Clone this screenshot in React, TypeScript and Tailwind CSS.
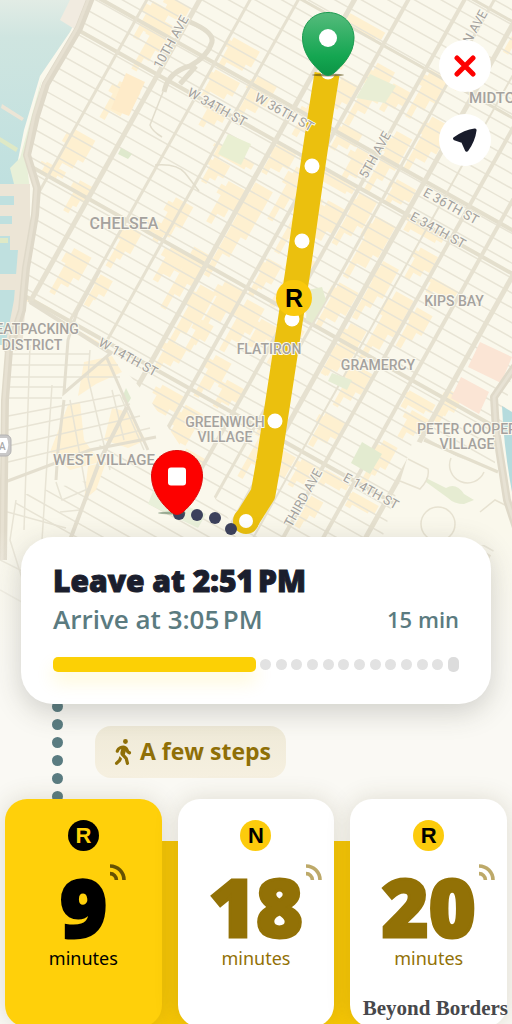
import { FaPersonWalking } from "react-icons/fa6";

/* ───────────────── Data ───────────────── */

type Departure = {
  line: string;
  minutes: number;
  active?: boolean;
};

const departures: Departure[] = [
  { line: "R", minutes: 9, active: true },
  { line: "N", minutes: 18 },
  { line: "R", minutes: 20 },
];

type Label = {
  text: string;
  x: number;
  y: number;
  size?: number;
  angle?: number;
};

const districts: Label[] = [
  { text: "CHELSEA", x: 124, y: 229, size: 16 },
  { text: "EATPACKING", x: 37, y: 334, size: 14 },
  { text: "DISTRICT", x: 32, y: 350, size: 14 },
  { text: "FLATIRON", x: 269, y: 354, size: 14 },
  { text: "KIPS BAY", x: 454, y: 306, size: 14 },
  { text: "GRAMERCY", x: 378, y: 370, size: 14 },
  { text: "GREENWICH", x: 225, y: 427, size: 14 },
  { text: "VILLAGE", x: 225, y: 442, size: 14 },
  { text: "PETER COOPER", x: 467, y: 434, size: 14 },
  { text: "VILLAGE", x: 467, y: 449, size: 14 },
  { text: "WEST VILLAGE", x: 104, y: 465, size: 15 },
  { text: "MIDTOWN", x: 504, y: 103, size: 15 },
];

const streetNames: Label[] = [
  { text: "10TH AVE", x: 175, y: 44, angle: -61 },
  { text: "W 34TH ST", x: 215, y: 111, angle: 29 },
  { text: "W 36TH ST", x: 282, y: 116, angle: 29 },
  { text: "N AVE", x: 479, y: 29, angle: -61 },
  { text: "5TH AVE", x: 379, y: 157, angle: -61 },
  { text: "E 36TH ST", x: 449, y: 210, angle: 29 },
  { text: "E 34TH ST", x: 436, y: 234, angle: 29 },
  { text: "W 14TH ST", x: 126, y: 361, angle: 29 },
  { text: "THIRD AVE", x: 307, y: 500, angle: -61 },
  { text: "E 14TH ST", x: 369, y: 495, angle: 29 },
];

// the street grid is turned 29.3°, these are positions across it
const avenues: [number, number][] = [
  [128, 3], [174, 5], [218, 3], [260, 3], [309, 5], [356, 4],
  [405, 4], [431, 3], [459, 5], [484, 2], [510, 4], [545, 4], [582, 5],
];

const crossStreets: [number, number][] = [
  [-232, 3], [-148, 3], [-50, 4], [-12, 4], [130, 4], [246, 4],
];

// x, y, width, height inside the turned grid
const blocks: [number, number, number, number][] = [
  [134, -74, 20, 36], [148, -86, 22, 20], [148, -62, 18, 50], [144, 12, 24, 36],
  [222, -82, 30, 30], [222, -45, 28, 26], [234, -16, 20, 24], [262, -60, 22, 40],
  [128, 76, 24, 42], [120, 118, 22, 12], [158, 118, 16, 30], [262, 18, 40, 12],
  [264, 32, 18, 24], [288, 46, 20, 40], [250, 86, 20, 42], [312, 34, 20, 92],
  [222, 134, 16, 40], [240, 116, 24, 14], [270, 130, 20, 34], [290, 120, 18, 60],
  [186, 180, 20, 44], [222, 190, 14, 30], [314, 150, 18, 60],
  [334, 134, 22, 46], [332, 180, 14, 30], [314, 214, 20, 26], [170, 244, 26, 18],
  [360, -130, 20, 60], [384, -120, 20, 26], [360, -60, 22, 24], [384, -46, 20, 32],
  [312, -160, 40, 14], [312, -130, 20, 40], [336, -100, 18, 36], [320, -60, 16, 30],
  [338, -40, 18, 28], [312, -10, 22, 28], [340, 0, 16, 52], [362, -10, 40, 12],
  [362, 16, 18, 60], [384, 14, 20, 46], [384, 74, 20, 52], [360, 94, 16, 36],
  [410, -150, 20, 46], [436, -190, 22, 40], [464, -240, 30, 34], [410, -80, 18, 60],
  [434, -110, 22, 52], [434, -38, 22, 24], [408, -8, 20, 50], [434, 4, 22, 60],
  [464, -12, 40, 13], [488, 10, 20, 30], [462, 40, 18, 56], [434, 80, 22, 44],
  [410, 100, 18, 28], [464, 110, 18, 50], [488, 60, 20, 70], [514, 30, 28, 14],
  [514, 64, 18, 38], [462, 134, 20, 30], [362, 140, 20, 50], [384, 150, 20, 26],
  [362, 204, 18, 40], [384, 220, 20, 26], [410, 140, 18, 40], [488, 144, 20, 40],
  [548, 140, 30, 16], [560, 156, 20, 26], [486, 200, 22, 32], [440, 230, 20, 60],
  [464, 254, 18, 40], [488, 252, 20, 26], [514, 250, 28, 14], [514, 280, 14, 30],
  [550, 196, 16, 42], [584, 120, 14, 30], [548, 256, 30, 14], [330, 256, 24, 30],
  [314, 280, 22, 50], [288, 290, 18, 50], [360, 262, 20, 60], [382, 300, 22, 40],
  [250, 278, 22, 40], [230, 250, 24, 30], [268, 330, 22, 46], [336, 320, 18, 50],
];

const stops: [number, number][] = [
  [328, 72], [312, 166], [302, 241], [292, 319], [275, 421],
];

const walkDots: [number, number][] = [
  [179, 514], [197, 515], [215, 518], [231, 529],
];

const minorStreets = Array.from({ length: 52 }, (_, i) => -320 + i * 13);

/* ───────────────── Map ───────────────── */

// a block with two stepped corners, so that rows do not look like tiles
function blockPath([x, y, w, h]: [number, number, number, number]) {
  return `M${x} ${y}h${w}v${h * 0.6}h-6v${h * 0.25}h-${w - 12}v${h * 0.3}h-6V${y + h * 0.4}h-5v-${h * 0.25}h5Z`;
}

function RouteMap() {
  return (
    <svg
      className="absolute inset-x-0 top-0 h-[700px] w-full"
      viewBox="0 0 512 700"
      preserveAspectRatio="xMidYMin slice"
      role="img"
      aria-label="Route map"
    >
      <defs>
        <linearGradient id="water" x1="0" y1="0" x2="0" y2="1">
          <stop offset="0" stopColor="#e2ece5" />
          <stop offset="0.2" stopColor="#cfe5e0" />
          <stop offset="1" stopColor="#bfe0df" />
        </linearGradient>
        <linearGradient id="start" x1="0" y1="0" x2="0" y2="1">
          <stop offset="0" stopColor="#55bb7c" />
          <stop offset="0.7" stopColor="#14a651" />
          <stop offset="1" stopColor="#0c9445" />
        </linearGradient>
        <linearGradient id="haze" x1="0" y1="0" x2="0" y2="1">
          <stop offset="0" stopColor="#faf9f4" stopOpacity="0" />
          <stop offset="0.8" stopColor="#faf9f4" stopOpacity="1" />
          <stop offset="1" stopColor="#faf9f4" stopOpacity="1" />
        </linearGradient>
        <clipPath id="uptown">
          <path d="M92 0 78 31 46 85 34 120 27 155 37 190 34 215 25 300 112 354 150 400 236 530 230 700H500V540L486 510 512 373V0Z" />
        </clipPath>
        <clipPath id="village">
          <path d="M112 400 150 400 236 530 230 700H0V500L90 480Z" />
        </clipPath>
      </defs>

      <rect width="512" height="700" fill="#faf8ec" />

      <g clipPath="url(#village)">
        <g transform="rotate(29.3)" stroke="#e8e4d5" strokeWidth="1.5">
          <path d="M260 340H700M260 353H700M260 366H700M260 379H700M260 392H700M260 405H700M260 418H700M260 431H700" />
        </g>
      </g>
      <path
        d="M84 362 112 356 122 372 96 384 78 396ZM68 405 80 402 84 440 100 462 70 470 50 452ZM112 408 128 412 146 440 128 448 104 440ZM88 466 106 462 96 490 84 500Z"
        fill="#fef1d3"
      />

      <g clipPath="url(#uptown)">
        <g transform="rotate(29.3)">
          {blocks.map((b) => (
            <path key={`${b[0]}-${b[1]}`} d={blockPath(b)} fill="#fef0d0" />
          ))}
          <path
            d={minorStreets.map((y) => `M-20 ${y}H700`).join("")}
            stroke="#e8e4d5"
            strokeWidth="1.500"
          />
          {crossStreets.map(([y, w]) => (
            <path key={y} d={`M0 ${y}H700`} stroke="#e4dfcd" strokeWidth={w} />
          ))}
          {avenues.map(([x, w]) => (
            <path key={x} d={`M${x} -400V500`} stroke="#e6e1d0" strokeWidth={w} />
          ))}
        </g>
      </g>

      {/* plain blocks and parks */}
      <path d="M126 73 145 82 129 116 111 109Z" fill="#feebc9" />
      <path d="M228 134 251 144 241 165 218 154Z" fill="#e9efd2" />
      <path d="M121 148 132 154 128 159 118 154Z" fill="#dfe9cd" />
      <path d="M370 74 396 86 385 103 356 98Z" fill="#e9eed5" />
      <path d="M308 290 322 287 326 300 312 323 306 320Z" fill="#e6ecd0" />
      <path d="M332 373 352 380 347 390 328 381Z" fill="#e6edd4" />
      <path d="M362 442 382 454 370 474 351 463Z" fill="#e3ebd0" />
      <path d="M480 342 512 357 501 383 468 367Z" fill="#fbe5d5" />
      <path d="M461 377 489 392 479 414 451 398Z" fill="#fbe5d5" />
      <path d="M159 476 172 500 206 514 198 528 148 504Z" fill="#e9f0da" />
      <path d="M126 388 131 398 127 405 122 398Z" fill="#e0ead0" />

      {/* West Village */}
      <g fill="none" stroke="#e8e4d5" strokeWidth="1.5">
        <path d="M8 365H118M8 377H120M8 387H66M8 398H62M8 354H90M30 345 24 530M52 385 42 540" />
        <path d="M90 350 88 378M8 416 120 395M8 430 130 404M8 446 140 416M8 462 150 428" />
        <path d="M70 400 88 500M88 378 110 470M112 390 124 440M120 395 144 450" />
        <path d="M56 482 62 500 90 488M60 512 80 510M0 510 66 528M16 500 10 540" />
        <path d="M0 560 120 620M0 590 90 640M10 540 60 700" />
      </g>
      <g fill="none" stroke="#e4dfcf" strokeWidth="3">
        <path d="M100 270 77 312 68 340 64 393 112 352M64 400 58 450 56 480M106 356 127 404 148 450M5 482 90 450 156 437" />
        <path d="M127 407 100 460 70 540 50 600M30 302 112 354" strokeWidth="4" />
      </g>

      {/* Peter Cooper Village */}
      <path d="M413 440 498 472 508 545H380Z" fill="#faf8ec" />
      <path
        d="M426 478 446 488Q456 482 464 494L474 500 464 504Q454 504 448 498L426 482Z"
        fill="#e6ecd2"
      />
      <g fill="none" stroke="#e7e2d1" strokeWidth="1.5">
        <circle cx="438" cy="524" r="17" />
        <path d="M451 458a17 17 0 0 0 33 14M408 459l20 10q2 10-8 20l-20-8M480 512l15-12 12 6" />
      </g>
      <path d="M424 440 498 472" stroke="#e4dfcd" strokeWidth="3" />

      {/* ramps round the rail yards */}
      <g fill="none" stroke="#e2ddcc">
        <path d="M190 22q24 10 22 20-4 14-22 24-22 6-26 26M196 66l-16 18" strokeWidth="5" />
        <path d="M163 92 150 125q2 6 12 12M155 165q22-2 30 8l14 18" strokeWidth="1.5" />
      </g>

      {/* rivers */}
      <path d="M0 0H86L70 32 40 76 24 130 18 160 16 184 0 186Z" fill="url(#water)" />
      <path d="M0 186H18V345H0Z" fill="#bfe0df" />
      <path d="M70 0H90L76 30 60 20Z" fill="#f1ebe0" />
      <path d="M42 78 20 158 10 168 14 184 30 190 26 158Z" fill="#e8f0d8" />
      <g fill="#ece5d6">
        <path d="M0 184H30V250H10V236H0V224H12V216H0V205H14V196H0Z" />
        <path d="M0 274H22V290H0ZM2 104 24 118 22 121 1 108Z" />
        <path d="M18 250H30L22 350 4 352 14 300Z" />
      </g>
      <path d="M0 137 18 148 16 152 0 142ZM0 238H8V243H0Z" fill="#dfe9c6" />
      <path d="M502 406 512 412V492Q504 450 502 406Z" fill="#b5dbdd" />

      {/* highways */}
      <g fill="none" strokeLinejoin="round">
        <path d="M92-5 79 28 46 84 36 116 27 155 37 188 35 215 26 268 22 310 9 350 5 400 3 560" stroke="#dfd9c9" strokeWidth="8" />
        <path d="M90-5 77 28 44 84 34 116 26 155 36 188 34 215 25 268 21 310 8 350 4 400 2 560" stroke="#e7e1d2" strokeWidth="3" />
        <path d="M518 362 494 397 496 430 507 500 520 540" stroke="#dfd9c9" strokeWidth="8" />
        <path d="M518 362 494 397 496 430 507 500 520 540" stroke="#e7e2d4" strokeWidth="3" />
      </g>

      <g>
        <rect x="-12" y="435" width="23" height="21" rx="5" fill="#c9c8c8" stroke="#b4b3b3" />
        <path d="M-10 438H7q3 8-1 15H-10Z" fill="#fff" />
        <text x="-1" y="450" fontSize="10" className="font-['Roboto',sans-serif] font-medium" fill="#aaa">
          A
        </text>
      </g>

      <rect y="530" width="512" height="170" fill="url(#haze)" />

      {/* route */}
      <path
        d="M327 74C312 166 306 215 298 270L269 460 263 494 246 521"
        fill="none"
        stroke="#ebc00e"
        strokeWidth="25"
        strokeLinejoin="round"
      />
      <circle cx="246" cy="521" r="13" fill="#ebc00e" />
      <circle cx="246" cy="521" r="7" fill="#fff" />
      {stops.map(([x, y]) => (
        <circle key={y} cx={x} cy={y} r="7.5" fill="#fff" />
      ))}
      <circle cx="294" cy="298" r="18" fill="#fac90c" />
      <text
        x="294"
        y="307"
        fontSize="25"
        textAnchor="middle"
        className="font-['Liberation_Sans',sans-serif] font-bold"
      >
        R
      </text>
      {walkDots.map(([x, y]) => (
        <circle key={x} cx={x} cy={y} r="6" fill="#3c415c" />
      ))}

      {/* names */}
      <g
        className="font-['Roboto',sans-serif] font-medium"
        fill="#a5a29e"
        stroke="#fbf9ee"
        strokeWidth="2"
        paintOrder="stroke"
        textAnchor="middle"
      >
        {districts.map((d) => (
          <text key={`${d.text}-${d.x}-${d.y}`} x={d.x} y={d.y} fontSize={d.size}>
            {d.text}
          </text>
        ))}
      </g>
      <g
        className="font-['Roboto',sans-serif]"
        fill="#a3a19d"
        stroke="#fbf9ee"
        strokeWidth="2"
        paintOrder="stroke"
        textAnchor="middle"
      >
        {streetNames.map((s) => (
          <text
            key={s.text}
            fontSize="13"
            transform={`translate(${s.x} ${s.y}) rotate(${s.angle})`}
          >
            {s.text}
          </text>
        ))}
      </g>

      {/* pins */}
      <ellipse cx="328" cy="75" rx="16" ry="1.5" fill="#5a4a10" opacity="0.6" />
      <path
        d="M328 12.500C313 12.500 302.500 24 302.500 38 302.500 54 314 66 322 73Q328 78 334 73C342 66 354 54 354 38 354 24 343 12.500 328 12.500Z"
        fill="url(#start)"
        stroke="#1c9a50"
        strokeWidth="1"
      />
      <circle cx="328" cy="38" r="9" fill="#fff" />
      <ellipse cx="172" cy="513" rx="14" ry="1.500" fill="#4a6a4a" opacity="0.5" />
      <path
        d="M177 450.500C162 450.500 151.500 462 151.500 476 151.500 492 163 505 171 512Q177 517 183 512C191 505 202.500 492 202.500 476 202.500 462 192 450.500 177 450.500Z"
        fill="#fd0100"
        stroke="#dd0a0a"
        strokeWidth="1"
      />
      <rect x="168" y="467.500" width="18" height="18" rx="3" fill="#fff" />
    </svg>
  );
}

/* ───────────────── Parts ───────────────── */

function SignalIcon() {
  return (
    <svg
      className="absolute top-0 left-full ml-[3px] size-4 opacity-60"
      viewBox="0 0 16 16"
      fill="none"
      stroke="currentColor"
      strokeWidth="3.6"
      aria-hidden="true"
    >
      <path d="M0 2A14 14 0 0 1 14 16" />
      <path d="M0 9.600A6.400 6.400 0 0 1 6.400 16" />
    </svg>
  );
}

function DepartureCard({ line, minutes, active }: Departure) {
  return (
    <button
      type="button"
      className={`flex h-[228px] flex-col items-center rounded-[22px] pt-[21px] shadow-[0_0_24px_rgba(80,70,30,0.16)] ${
        active ? "bg-[#ffd00a] text-black" : "bg-white text-[#927106]"
      }`}
    >
      <span
        className={`flex size-[31px] items-center justify-center rounded-full font-['Liberation_Sans',sans-serif] text-[22px] font-bold ${
          active ? "bg-black text-[#ffd00a]" : "bg-[#fccb0c] text-black"
        }`}
      >
        {line}
      </span>
      <span className="relative mt-[13px] font-['Noto_Sans',sans-serif] text-[80px] leading-[84px] font-black [-webkit-text-stroke:3px_currentColor] [stroke-linejoin:round]">
        {minutes}
        <SignalIcon />
      </span>
      <span className="font-['Noto_Sans',sans-serif] text-[18px] leading-5">
        minutes
      </span>
    </button>
  );
}

function TripCard() {
  return (
    <section className="relative z-10 mx-[21px] rounded-[32px] bg-white px-8 pt-6 pb-8 shadow-[0_8px_28px_rgba(60,60,50,0.22)]">
      <h1 className="font-['Open_Sans',sans-serif] text-[30px] leading-10 font-extrabold text-[#1b1e2d] [-webkit-text-stroke:1px_currentColor]">
        Leave at 2:51{"\u202f"}PM
      </h1>
      <div className="flex items-center justify-between text-[#5b7b80]">
        <p className="font-['Open_Sans',sans-serif] text-[26px] leading-9 font-semibold">
          Arrive at 3:05{"\u202f"}PM
        </p>
        <p className="font-['Open_Sans',sans-serif] text-[22px] leading-8 font-semibold">
          15 min
        </p>
      </div>
      <div className="mt-5 flex items-center gap-1">
        <div className="h-[15px] w-1/2 rounded-[5px] bg-[#fcd005] shadow-[0_10px_18px_rgba(255,215,0,0.16)]" />
        <div className="flex flex-1 items-center justify-between">
          {Array.from({ length: 12 }, (_, i) => (
            <span key={i} className="size-[11px] rounded-full bg-[#e2e2e2]" />
          ))}
          <span className="h-[15px] w-[11px] rounded-[5px] bg-[#dcdcdc]" />
        </div>
      </div>
    </section>
  );
}

/* ───────────────── Page ───────────────── */

export default function App() {
  return (
    <main className="relative flex h-screen flex-col overflow-hidden bg-[#faf9f4]">
      <RouteMap />

      <div className="relative flex flex-1 flex-col items-end gap-[22px] pt-10 pr-[21px]">
        <button
          type="button"
          aria-label="Close"
          className="flex size-[52px] items-center justify-center rounded-full bg-white"
        >
          <svg viewBox="0 0 22 22" className="size-[22px]" aria-hidden="true">
            <path d="M3 3 19 19M19 3 3 19" stroke="#fd0100" strokeWidth="5" strokeLinecap="round" />
          </svg>
        </button>
        <button
          type="button"
          aria-label="Center map"
          className="flex size-[52px] items-center justify-center rounded-full bg-white"
        >
          <svg viewBox="0 0 24 24" className="size-6" aria-hidden="true">
            <path
              d="M21.800 2.200Q12 3.500 1.800 10.600L9.800 13.400 13.700 22Q20.500 12.500 21.800 2.200Z"
              fill="#191c2b"
              stroke="#191c2b"
              strokeWidth="3.500"
              strokeLinejoin="round"
            />
          </svg>
        </button>
      </div>

      <TripCard />

      <section className="relative flex h-[95px] items-center px-[52px]">
        <div className="flex flex-col gap-[7px]">
          {Array.from({ length: 6 }, (_, i) => (
            <span key={i} className="size-[11px] rounded-full bg-[#5a7c81]" />
          ))}
        </div>
        <p className="ml-8 flex h-[52px] items-center gap-1 rounded-2xl bg-linear-to-b from-[#efead8] to-[#f6f0e0] px-[15px] font-['Open_Sans',sans-serif] text-[23px] font-bold text-[#8f6f07]">
          <FaPersonWalking className="size-[26px]" aria-hidden="true" />
          A few steps
        </p>
      </section>

      <section className="relative px-[5px]">
        <div className="absolute inset-x-1/4 top-[42px] bottom-0 bg-[#f8c806]" />
        <div className="relative -mb-[3px] grid grid-cols-3 gap-4">
          {departures.map((d) => (
            <DepartureCard key={d.minutes} {...d} />
          ))}
        </div>
      </section>

      <p className="absolute right-1 bottom-1 font-['Liberation_Serif',serif] text-[21px] leading-6 font-bold text-[#47484b]">
        Beyond Borders
      </p>
    </main>
  );
}
